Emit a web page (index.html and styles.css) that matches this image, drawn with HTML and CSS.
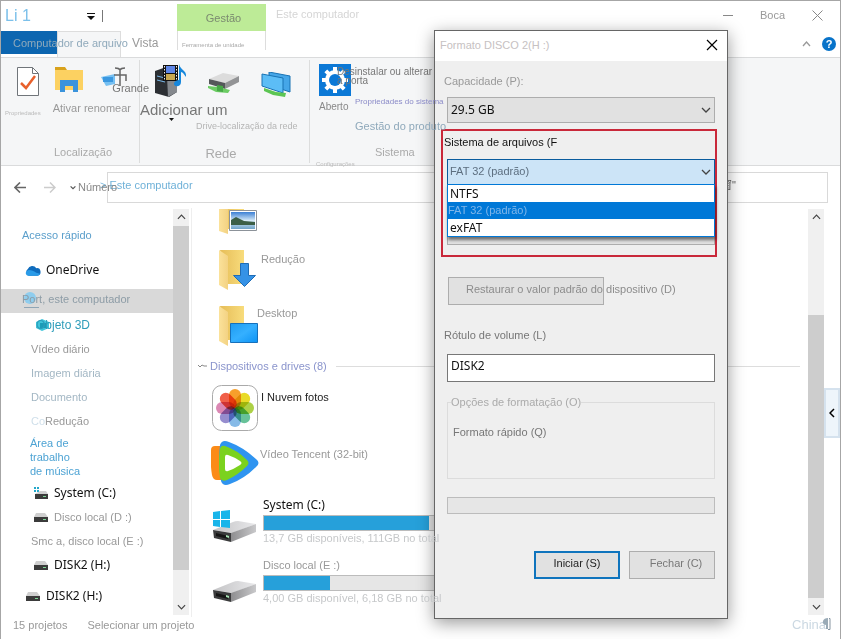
FILE: index.html
```html
<!DOCTYPE html>
<html lang="pt">
<head>
    <meta charset="UTF-8">
    <meta name="viewport" content="width=device-width, initial-scale=1.0">
    <title>Este computador</title>
    <link rel="stylesheet" href="styles.css">
</head>
<body>
    <!-- Shared icons -->
    <svg class="defs" width="0" height="0" aria-hidden="true">
        <defs>
            <linearGradient id="folder-front" x1="0" x2="1"><stop offset="0" stop-color="#fbe29a"/><stop offset="1" stop-color="#f3d283"/></linearGradient>
            <linearGradient id="folder-back" x1="0" x2="1"><stop offset="0" stop-color="#e6bd58"/><stop offset="1" stop-color="#f8dc7c"/></linearGradient>
            <linearGradient id="metal" x1="0" x2="1"><stop offset="0" stop-color="#c4c4c6"/><stop offset="1" stop-color="#e8e8ea"/></linearGradient>
            <linearGradient id="metal-side" x1="0" x2="1"><stop offset="0" stop-color="#8e8e90"/><stop offset="1" stop-color="#c9c9cb"/></linearGradient>
            <linearGradient id="screen" x1="0" y1="0" x2="1" y2="1"><stop offset="0" stop-color="#1e9bf0"/><stop offset="0.5" stop-color="#35b0ff"/><stop offset="1" stop-color="#0c93f5"/></linearGradient>
            <linearGradient id="sky" x1="0" y1="0" x2="0" y2="1"><stop offset="0" stop-color="#3b7fd4"/><stop offset="0.5" stop-color="#d5e9f7"/><stop offset="1" stop-color="#6fa3c8"/></linearGradient>
            <symbol id="folder" viewBox="0 0 26 40">
                <path d="M1 0h24v34H9z" fill="url(#folder-back)"/>
                <path d="M0 0l9 6v34l-9-5z" fill="url(#folder-front)"/>
            </symbol>
            <symbol id="drive" viewBox="0 0 44 22">
                <path d="M0 9L20 1q2-1 5-1l18 3-24 9z" fill="url(#metal)"/>
                <path d="M18 12l25-9v8L18 21z" fill="url(#metal-side)"/>
                <path d="M0 9l18 3v9L1 17z" fill="#3a3b3c"/>
                <path d="M3 12l12 3v3L3 15z" fill="#151515"/>
                <path d="M13 14l3 1v2l-3-1z" fill="#a7e3b4"/>
            </symbol>
            <symbol id="drive-small" viewBox="0 0 14 9">
                <path d="M2 0h9l3 4H0z" fill="#cfcfcf"/>
                <path d="M0 4h14v5H0z" fill="#3b3b3b"/>
                <path d="M9 6h3v1H9z" fill="#7ed695"/>
            </symbol>
            <symbol id="chevron" viewBox="0 0 10 6"><path d="M1 1l4 4 4-4" fill="none" stroke="currentColor" stroke-width="1.3"/></symbol>
        </defs>
    </svg>

    <div class="window">
        <header class="header">
            <div class="header-left">
                <div class="quick-bar">
                    <span class="quick-title">Li 1</span>
                    <svg class="quick-caret" width="8" height="7" viewBox="0 0 8 7"><path d="M0 0h8v1H0zM0 3h8L4 7z" fill="#111"/></svg>
                    <span class="quick-sep"></span>
                </div>
                <div class="tabs">
                    <button class="tab tab-file">Computador de arquivo</button>
                    <span class="tab-selected"></span>
                    <button class="tab tab-view">Vista</button>
                </div>
            </div>
            <div class="context-tab">
                <div class="context-title">Gestão</div>
                <button class="context-name">Ferramenta de unidade</button>
            </div>
            <div class="header-title">Este computador</div>
            <div class="header-right">
                <div class="window-buttons">
                    <button class="plain" aria-label="Minimizar"><svg width="10" height="10"><path d="M0 5.500h10" stroke="#888"/></svg></button>
                    <button class="plain">Boca</button>
                    <button class="plain" aria-label="Sair"><svg width="11" height="11"><path d="M.5.500l10 10M10.500.500l-10 10" stroke="#888"/></svg></button>
                </div>
                <div class="help-buttons">
                    <button class="plain" aria-label="Recolher"><svg width="9" height="6" viewBox="0 0 9 6"><path d="M1 5l3.500-4L8 5" fill="none" stroke="#999" stroke-width="1.300"/></svg></button>
                    <button class="help" aria-label="Ajuda">?</button>
                </div>
            </div>
        </header>

        <section class="ribbon">
            <div class="group group-place">
                <div class="tools">
                    <div class="tool">
                        <svg width="22" height="29" viewBox="0 0 22 29"><path d="M.5.500h15l6 6v22H.5z" fill="#fff" stroke="#70757a"/><path d="M15.500.500v6h6" fill="none" stroke="#70757a"/><path d="M4 16l5 5 9-12" fill="none" stroke="#e8602c" stroke-width="2.500"/></svg>
                        <span class="text-tiny">Propriedades</span>
                    </div>
                    <div class="tool">
                        <div class="icons">
                            <svg width="28" height="25" viewBox="0 0 28 25"><path d="M0 0h10l2 3H0z" fill="#d9a21c"/><path d="M0 3h28v20H0z" fill="#fcd161"/><path d="M5 13h18v12h-5v-6h-8v6H5z" fill="#3a93dc"/></svg>
                            <svg width="28" height="29" viewBox="0 0 28 29"><path d="M1 10l14-3v10L6 19z" fill="#76c0f2"/><path d="M3 10h10v5H3z" fill="#3b98e0"/><path d="M15 1q4 0 5 2 1-2 5-2M20 2v17M14 8h12v6" fill="none" stroke="#666" stroke-width="1.500"/></svg>
                            <span class="icon-note">Grande</span>
                        </div>
                        <span>Ativar renomear</span>
                    </div>
                </div>
                <div class="group-name">Localização</div>
            </div>

            <div class="group group-net">
                <div class="icons">
                    <svg width="32" height="33" viewBox="0 0 32 33"><path d="M0 7l14-5 8 4v22l-8 5-14-4z" fill="#2c2f33"/><path d="M12 12l10-3v19l-9 5z" fill="#85898e"/><path d="M2 12l8 2M2 16l8 2" stroke="#79b7e8"/><path d="M8 1h15v16H8z" fill="#111"/><path d="M11 2h9v7h-9z" fill="#5f86e6"/><path d="M11 10h9v6h-9z" fill="#c9a850"/><path d="M9.500 2v15M21.500 2v15" stroke="#eee" stroke-dasharray="1.500 1.500"/><path d="M24 0c1 6 8 6 7 13l-3-4c-1-1-2-1-2-1v10c0 6-8 5-7 1 1-2 3-3 5-3z" fill="#1687dc"/></svg>
                    <svg class="icon-low" width="32" height="22" viewBox="0 0 32 22"><path d="M1 7l14-6 16 3-14 7z" fill="#dcdcdc"/><path d="M17 11l14-7v6l-14 7z" fill="#939496"/><path d="M1 7l16 4v6L1 12z" fill="#55585a"/><path d="M0 14l10 1 12 3-2 3-12-1-8-4z" fill="#6ccc64"/><path d="M9 13l6 1v6l-6-1z" fill="#47a847"/></svg>
                    <svg class="icon-low" width="30" height="26" viewBox="0 0 30 26"><path d="M8 0l21 4v16L8 13z" fill="#45a6e8" stroke="#1873b4"/><path d="M1 2l21 4v15L1 14z" fill="#5cbdf6" stroke="#1873b4"/><path d="M3 16l12 4 10 1-1 4-12-2-9-4z" fill="#5cc553"/></svg>
                </div>
                <button class="plain add-button">Adicionar um<svg class="add-caret" width="5" height="3" viewBox="0 0 5 3"><path d="M0 0h5L2.500 3z" fill="#111"/></svg></button>
                <span class="net-text">Drive-localização da rede</span>
                <div class="group-name group-name-big">Rede</div>
            </div>

            <div class="group group-system">
                <div class="system-tools">
                    <div class="open-tool">
                        <svg width="32" height="32" viewBox="0 0 32 32"><path d="M0 0h32v32H0z" fill="#0b78d6"/><g fill="#fff"><path d="M14 3h4v26h-4zM3 14h26v4H3z"/><path d="M14 3h4v26h-4zM3 14h26v4H3z" transform="rotate(45 16 16)"/><circle cx="16" cy="16" r="10"/></g><circle cx="16" cy="16" r="6" fill="#0b78d6"/></svg>
                        <button class="plain">Aberto</button>
                    </div>
                    <div class="system-links">
                        <a href="#" class="link-uninstall">Desinstalar ou alterar<br>a porta</a>
                        <a href="#" class="link-props">Propriedades do sistema</a>
                        <a href="#" class="link-manage">Gestão do produto</a>
                    </div>
                </div>
                <div class="group-name">Sistema</div>
                <span class="text-tiny settings-text">Configurações</span>
            </div>
        </section>

        <nav class="address">
            <button class="plain" aria-label="Voltar"><svg width="12" height="11" viewBox="0 0 12 11"><path d="M12 5.500H1M6 .5l-5 5 5 5" fill="none" stroke="#666" stroke-width="1.600"/></svg></button>
            <button class="plain" aria-label="Avançar"><svg width="12" height="11" viewBox="0 0 12 11"><path d="M0 5.500h11M6 .5l5 5-5 5" fill="none" stroke="#ccc" stroke-width="1.500"/></svg></button>
            <button class="plain recent"><svg width="6" height="5" viewBox="0 0 10 6"><path d="M1 1l4 4 4-4" fill="none" stroke="#555" stroke-width="2"/></svg><span>Número</span></button>
            <div class="address-box">
                <a href="#">&gt; Este computador</a>
                <span class="address-search">窗"</span>
            </div>
        </nav>

        <main class="main">
            <ul class="sidebar">
                <li class="row row-top"><a href="#">Acesso rápido</a></li>
                <li class="row row-tall row-segoe">
                    <svg width="17" height="11" viewBox="0 0 17 11"><path d="M4 11a4 4 0 0 1-1-7 5 5 0 0 1 9-1 4 4 0 0 1 1 8z" fill="#0f6cbd"/><path d="M3 11c-3-1-3-5 1-6 3 0 5 1 8 3l4 1c0 1-1 2-3 2z" fill="#2a9be8"/></svg>
                    <a href="#">OneDrive</a>
                </li>
                <li class="row row-selected">
                    <svg class="row-mark" width="17" height="17" viewBox="0 0 17 17"><circle cx="8" cy="7" r="6" fill="#8fcdee"/><path d="M2 16.500h15" stroke="#8fa5b5"/></svg>
                    <a href="#">Port, este computador</a>
                </li>
                <li class="row row-cyan">
                    <svg class="row-mark" width="13" height="12" viewBox="0 0 13 12"><path d="M0 3l6-3 7 3v6l-7 3-6-3z" fill="#3fc5da"/><path d="M4 4h6v5H4z" fill="#1a9cb8"/></svg>
                    <a href="#">Objeto 3D</a>
                </li>
                <li class="row row-child row-gray"><a href="#">Vídeo diário</a></li>
                <li class="row row-child row-pale"><a href="#">Imagem diária</a></li>
                <li class="row row-child row-pale"><a href="#">Documento</a></li>
                <li class="row row-child row-gray"><span class="faded">Co</span><a href="#">Redução</a></li>
                <li class="row row-child row-lines"><a href="#">Área de<br>trabalho<br>de música</a></li>
                <li class="row row-drive row-segoe">
                    <svg width="14" height="12" viewBox="0 0 14 12"><path d="M0 0h2v2H0zM3 0h2v2H3zM0 3h2v2H0zM3 3h2v2H3z" fill="#22a7c9"/><path d="M6 4h6l2 3H1z" fill="#cfcfcf"/><path d="M1 7h13v5H1z" fill="#3b3b3b"/><path d="M9 9h3v1H9z" fill="#7ed695"/></svg>
                    <a href="#">System (C:)</a>
                </li>
                <li class="row row-drive row-gray"><svg width="14" height="9"><use href="#drive-small"/></svg><a href="#">Disco local (D :)</a></li>
                <li class="row row-child row-gray"><a href="#">Smc a, disco local (E :)</a></li>
                <li class="row row-drive row-segoe"><svg width="14" height="9"><use href="#drive-small"/></svg><a href="#">DISK2 (H:)</a></li>
                <li class="row row-tall row-segoe"><svg width="14" height="9"><use href="#drive-small"/></svg><a href="#">DISK2 (H:)</a></li>
            </ul>
            <div class="scrollbar scrollbar-left">
                <svg class="flip" width="9" height="6"><use href="#chevron"/></svg>
                <span class="thumb"></span>
                <svg width="9" height="6"><use href="#chevron"/></svg>
            </div>

            <section class="content">
                <div class="tile tile-cut">
                    <svg class="folder-icon" width="39" height="25" viewBox="0 0 39 25"><path d="M1 0h24v20H9z" fill="url(#folder-back)"/><path d="M0 0h9v25l-9-3z" fill="url(#folder-front)"/><path d="M10.500 1.500h27v20h-27z" fill="#fff" stroke="#8c9299"/><path d="M12 3h24v17H12z" fill="url(#sky)"/><path d="M12 11l5-3 8 4 11 1v3H12z" fill="#3c5f46"/></svg>
                </div>
                <div class="tile">
                    <svg class="folder-icon" width="39" height="40" viewBox="0 0 39 40"><use href="#folder" width="26" height="40"/><path d="M21.500 13.500h8v12h7l-11 11-11-11h7z" fill="#3592e6" stroke="#1f6cb5"/></svg>
                    <span class="tile-name">Redução</span>
                </div>
                <div class="tile tile-last">
                    <svg class="folder-icon" width="39" height="40" viewBox="0 0 39 40"><use href="#folder" width="26" height="40"/><path d="M11.500 17.500h27v19h-27z" fill="url(#screen)" stroke="#1670bb"/></svg>
                    <span class="tile-name tile-name-near">Desktop</span>
                </div>
                <h2 class="content-title"><svg width="9" height="4" viewBox="0 0 9 4"><path d="M0 1l2 2 2-2 2 1h3" fill="none" stroke="#888"/></svg>Dispositivos e drives (8)</h2>
                <div class="tile">
                    <svg class="app-icon" width="46" height="46" viewBox="0 0 46 46">
                        <rect x=".5" y=".5" width="45" height="45" rx="9" fill="#fff" stroke="#aaa"/>
                        <g class="petals">
                            <rect x="17" y="4" width="12" height="19" rx="6" fill="#f79a1f"/>
                            <rect x="17" y="4" width="12" height="19" rx="6" fill="#e8d91c" transform="rotate(45 23 23)"/>
                            <rect x="17" y="4" width="12" height="19" rx="6" fill="#a9cf3c" transform="rotate(90 23 23)"/>
                            <rect x="17" y="4" width="12" height="19" rx="6" fill="#5fbf94" transform="rotate(135 23 23)"/>
                            <rect x="17" y="4" width="12" height="19" rx="6" fill="#7fb6e6" transform="rotate(180 23 23)"/>
                            <rect x="17" y="4" width="12" height="19" rx="6" fill="#9087cc" transform="rotate(225 23 23)"/>
                            <rect x="17" y="4" width="12" height="19" rx="6" fill="#d982b0" transform="rotate(270 23 23)"/>
                            <rect x="17" y="4" width="12" height="19" rx="6" fill="#f0563f" transform="rotate(315 23 23)"/>
                        </g>
                    </svg>
                    <span class="tile-name tile-name-dark">I Nuvem fotos</span>
                </div>
                <div class="tile">
                    <svg width="48" height="44" viewBox="0 0 48 44"><path d="M0 9q0-4 4-4h8v34H6q-4 0-5-5Q-1 22 0 9z" fill="#fb8b18"/><path d="M9 4q2-6 9-3 14 5 27 17 5 4 0 8-12 12-26 17-7 3-9-3Q7 22 9 4z" fill="#2f94f0"/><path d="M9 8q1-4 5-3 12 4 22 14 3 3 0 6-9 9-20 14-5 2-7-2Q7 22 9 8z" fill="#7bd21e"/><path d="M14 16q0-3 3-2 6 2 12 6 3 2 0 4-6 4-12 6-3 1-3-2z" fill="#fff"/></svg>
                    <span class="tile-name tile-name-dim">Vídeo Tencent (32-bit)</span>
                </div>
                <div class="tile tile-drive">
                    <svg class="drive-icon" width="44" height="33" viewBox="0 0 44 33"><use href="#drive" y="11" width="44" height="22"/><path d="M0 2l7-1v8H0zM8 1l9-1v9H8zM0 10h7v7l-7-1zM8 10h9v8l-9-1z" fill="#19b5ea"/></svg>
                    <div class="drive-info">
                        <span class="drive-name drive-name-segoe">System (C:)</span>
                        <div class="bar"><div class="bar-fill" style="width: 88%"></div></div>
                        <span class="drive-free">13,7 GB disponíveis, 111GB no total</span>
                    </div>
                </div>
                <div class="tile tile-drive">
                    <svg class="drive-icon" width="44" height="33" viewBox="0 0 44 33"><use href="#drive" y="11" width="44" height="22"/></svg>
                    <div class="drive-info">
                        <span class="drive-name">Disco local (E :)</span>
                        <div class="bar"><div class="bar-fill" style="width: 35%"></div></div>
                        <span class="drive-free">4,00 GB disponível, 6,18 GB no total</span>
                    </div>
                </div>
            </section>
            <div class="scrollbar scrollbar-right">
                <svg class="flip" width="9" height="6"><use href="#chevron"/></svg>
                <span class="thumb"></span>
                <svg width="9" height="6"><use href="#chevron"/></svg>
            </div>
            <button class="side-tab" aria-label="Abrir painel"><svg width="6" height="10" viewBox="0 0 6 10"><path d="M5 1L1 5l4 4" fill="none" stroke="#000" stroke-width="1.500"/></svg></button>
        </main>

        <footer class="status">
            <span>15 projetos</span>
            <span>Selecionar um projeto</span>
            <span class="status-lang">China<svg width="9" height="12" viewBox="0 0 9 12"><path d="M6 0v11H4V7Q0 6 1 3t5-3z" fill="#9aabb7"/><path d="M7 .5h1v11H6" fill="none" stroke="#8796a2"/></svg></span>
        </footer>

        <form class="dialog">
            <div class="dialog-title">
                <span>Formato DISCO 2(H :)</span>
                <button type="button" class="plain" aria-label="Fechar janela"><svg width="12" height="12"><path d="M1 1l10 10M11 1L1 11" stroke="#000" stroke-width="1.200"/></svg></button>
            </div>
            <div class="dialog-body">
                <label class="label-gray" for="capacity">Capacidade (P):</label>
                <div class="select-box">
                    <select id="capacity" class="select-segoe"><option>29.5 GB</option></select>
                    <svg width="10" height="6"><use href="#chevron"/></svg>
                </div>

                <div class="highlight">
                    <label class="label-black" for="file-system">Sistema de arquivos (F</label>
                    <div class="select-box select-open">
                        <select id="file-system"><option>FAT 32 (padrão)</option></select>
                        <svg width="10" height="6"><use href="#chevron"/></svg>
                        <ul class="options">
                            <li>NTFS</li>
                            <li class="option-active">FAT 32 (padrão)</li>
                            <li>exFAT</li>
                        </ul>
                    </div>
                    <div class="select-box select-unit">
                        <select aria-label="Tamanho da unidade"><option></option></select>
                    </div>
                </div>

                <button type="button" class="button button-restore">Restaurar o valor padrão do dispositivo (D)</button>

                <label for="volume">Rótulo de volume (L)</label>
                <input type="text" id="volume" value="DISK2">

                <fieldset>
                    <legend>Opções de formatação (O)</legend>
                    <span>Formato rápido (Q)</span>
                </fieldset>

                <div class="progress"></div>

                <div class="actions">
                    <button type="button" class="button button-start">Iniciar (S)</button>
                    <button type="button" class="button button-close">Fechar (C)</button>
                </div>
            </div>
        </form>
    </div>
</body>
</html>
```

FILE: styles.css
```css
* {
    box-sizing: border-box;
}

body {
    margin: 0;
    font-family: "Liberation Sans", Arial, "Noto Sans CJK SC", sans-serif;
    font-size: 11px;
    line-height: 14px;
    color: #999;
    background: #fff;
}

a {
    color: inherit;
    text-decoration: none;
}

ul {
    list-style: none;
    margin: 0;
    padding: 0;
}

button, input, select {
    font: inherit;
    color: inherit;
}

svg {
    display: block;
    flex: none;
}

.defs {
    position: absolute;
}

.plain {
    padding: 0;
    border: none;
    background: none;
    white-space: nowrap;
}

.window {
    position: relative;
    display: flex;
    flex-direction: column;
    min-height: 100vh;
    border: 1px solid #a6a6a6;
    overflow: hidden;
}

/* Header */
.header {
    display: flex;
    height: 56px;
}

.header-left {
    width: 176px;
}

.quick-bar {
    display: flex;
    align-items: center;
    height: 30px;
    padding-left: 4px;
}

.quick-title {
    width: 82px;
    font-size: 16px;
    color: #7cc0ea;
}

.quick-caret {
    margin-right: 7px;
}

.quick-sep {
    height: 12px;
    border-left: 1px solid #777;
}

.tabs {
    display: flex;
    height: 26px;
}

.tab {
    border: none;
    background: none;
    padding: 0 12px;
    text-align: left;
    white-space: nowrap;
}

.tab-file {
    position: relative;
    width: 56px;
    height: 23px;
    background: #0d66b0;
    color: #8fa9bb;
}

.tab-selected {
    width: 64px;
    background: #f5f6f7;
    border: 1px solid #ddd;
    border-bottom: none;
}

.tab-view {
    height: 23px;
    padding-left: 11px;
    font-size: 12px;
}

.context-tab {
    width: 89px;
    margin-top: 3px;
}

.context-title {
    height: 27px;
    line-height: 28px;
    padding-left: 4px;
    text-align: center;
    background: #bdeb97;
    color: #7b8a70;
}

.context-name {
    width: 100%;
    height: 19px;
    padding: 8px 0 0 4px;
    border: solid #ddd;
    border-width: 0 1px;
    background: none;
    font-size: 6px;
    line-height: 8px;
    text-align: left;
    color: #aaa;
}

.header-title {
    padding: 6px 10px;
    color: #d5d5d5;
}

.header-right {
    margin-left: auto;
    color: #999;
}

.window-buttons, .help-buttons {
    display: flex;
    align-items: center;
    justify-content: flex-end;
    height: 28px;
}

.window-buttons {
    gap: 27px;
    padding-right: 17px;
}

.help-buttons {
    height: 30px;
    gap: 11px;
    padding-right: 4px;
}

.help {
    width: 14px;
    height: 14px;
    padding: 0;
    border: none;
    border-radius: 50%;
    background: #0873c9;
    color: #fff;
    font-weight: bold;
}

/* Ribbon */
.ribbon {
    display: flex;
    height: 109px;
    background: #f5f6f7;
    border: solid #dadbdc;
    border-width: 1px 0;
}

.group {
    position: relative;
    display: flex;
    flex-direction: column;
    margin: 2px 0;
    border-right: 1px solid #dcdddd;
}

.group-place {
    width: 139px;
}

.group-net {
    width: 170px;
}

.group-system {
    flex: 1;
    border-right: none;
}

.tools {
    display: flex;
    gap: 12px;
    padding: 7px 0 0 4px;
}

.tool {
    display: flex;
    flex-direction: column;
    align-items: center;
    gap: 5px;
    white-space: nowrap;
}

.tool > svg {
    margin: 0 0 8px 10px;
}

.text-tiny {
    font-size: 6px;
    line-height: 8px;
    color: #bbb;
}

.icons {
    position: relative;
    display: flex;
    gap: 17px;
}

.icon-note {
    position: absolute;
    left: 57px;
    top: 14px;
    z-index: 1;
    color: #777;
}

.group-name {
    position: absolute;
    left: 0;
    right: 0;
    bottom: 4px;
    padding-left: 26px;
    text-align: center;
    color: #aaa;
}

.group-name-big {
    padding: 0 7px 0 0;
    font-size: 13px;
    bottom: 2px;
}

.group-net .icons {
    gap: 21px;
    padding: 4px 0 0 15px;
}

.icon-low {
    margin-top: 8px;
}

.add-button {
    align-self: flex-start;
    position: relative;
    margin-top: 3px;
    font-size: 15px;
    line-height: 18px;
    color: #777;
}

.add-caret {
    position: absolute;
    left: 29px;
    bottom: -2px;
}

.net-text {
    padding-left: 56px;
    font-size: 9px;
    color: #b5b5b5;
}

.system-tools {
    display: flex;
    padding: 4px 0 0 9px;
}

.open-tool {
    width: 32px;
    font-size: 10px;
    color: #888;
}

.open-tool button {
    margin-top: 4px;
}

.system-links {
    display: flex;
    flex-direction: column;
    align-items: flex-start;
    padding-left: 4px;
    white-space: nowrap;
}

.link-uninstall {
    margin-left: -18px;
    padding-top: 3px;
    font-size: 10px;
    line-height: 9px;
    color: #777;
}

.link-props, .link-manage {
    position: relative;
    z-index: 3;
}

.link-props {
    margin-top: 10px;
    font-size: 8px;
    color: #8b8bc8;
}

.link-manage {
    margin-top: 10px;
    color: #8fa9bb;
}

.group-system .group-name {
    padding-left: 65px;
    text-align: left;
}

.settings-text {
    position: absolute;
    left: 6px;
    bottom: -5px;
}

/* Address */
.address {
    display: flex;
    align-items: center;
    height: 42px;
    padding: 0 12px 0 13px;
}

.address > .plain {
    margin-right: 18px;
}

.address > .recent {
    display: flex;
    align-items: center;
    width: 37px;
    gap: 2px;
    margin: 0 0 0 -4px;
    color: #888;
}

.recent span {
    position: relative;
}

.address-box {
    flex: 1;
    display: flex;
    justify-content: space-between;
    height: 31px;
    padding: 5px 91px 0 0;
    border: 1px solid #d9d9d9;
    color: #6fb1d8;
}

.address-box a {
    margin-left: -8px;
}

.address-search {
    color: #666;
}

/* Main area */
.main {
    flex: 1;
    display: flex;
}

.sidebar {
    width: 172px;
    padding-top: 11px;
}

.row {
    position: relative;
    display: flex;
    align-items: center;
    gap: 6px;
    height: 24px;
    padding-left: 21px;
    color: #5b9fcb;
    white-space: nowrap;
}

.row a {
    position: relative;
}

.row-top {
    height: 32px;
}

.row-tall {
    height: 38px;
    padding-left: 24px;
}

.row-tall svg {
    width: 16px;
}

.row-tall {
    gap: 5px;
}

.row-segoe {
    font-family: "Noto Sans", "Segoe UI", sans-serif;
    font-size: 12px;
    color: #111;
}

.row-selected {
    padding-bottom: 4px;
    background: #d9d9d9;
    color: #8d9ca6;
}

.row-mark {
    position: absolute;
}

.row-cyan {
    padding-left: 35px;
    font-size: 12px;
    color: #2e9dba;
}

.row-child {
    padding-left: 30px;
    gap: 0;
}

.row-gray {
    color: #999;
}

.row-pale {
    color: #a3b7c4;
}

.row-lines {
    height: 48px;
    padding-left: 29px;
    color: #4da3d4;
}

.row-drive {
    padding-left: 33px;
}

.faded {
    color: #cfdfea;
}

.scrollbar {
    display: flex;
    flex-direction: column;
    align-items: center;
    width: 16px;
    margin: 1px 0 2px;
    padding: 5px 0;
    background: #f0f0f0;
    color: #444;
}

.scrollbar .thumb {
    width: 100%;
    background: #cdcdcd;
}

.scrollbar-left {
    margin-right: 2px;
}

.scrollbar-left .thumb {
    flex: 1;
    margin: 6px 0 34px;
}

.scrollbar-right .thumb {
    flex: 1;
    margin: 95px 0 6px;
}

.flip {
    transform: scaleY(-1);
}

.side-tab {
    align-self: center;
    width: 16px;
    height: 50px;
    padding: 0 3px;
    border: 2px solid #d5e2ee;
    background: #eef5fb;
}

.content {
    flex: 1;
    padding: 0 8px 0 19px;
    border-left: 1px solid #eee;
}

.tile {
    display: grid;
    grid-template-columns: 50px 1fr;
    align-items: start;
    height: 56px;
}

.tile-cut {
    height: 42px;
    padding-top: 1px;
}

.tile-last {
    height: 48px;
}

.folder-icon {
    margin-left: 8px;
}

.tile-name {
    padding-top: 2px;
}

.tile-name-near {
    margin-left: -4px;
    padding-top: 0;
}

.tile-name-dark {
    padding-top: 5px;
    color: #222;
}

.tile-name-dim {
    margin-left: -1px;
    padding-top: 6px;
}

.app-icon {
    margin-left: 1px;
}

.petals rect {
    mix-blend-mode: multiply;
    opacity: 0.95;
}

.petals {
    isolation: isolate;
}

.content-title {
    display: flex;
    align-items: center;
    gap: 3px;
    height: 24px;
    margin: 0 0 7px -13px;
    font-size: 11px;
    font-weight: normal;
    color: #8a94cc;
}

.content-title::after {
    content: "";
    flex: 1;
    margin-left: 6px;
    border-top: 1px solid #ddd;
}

.tile-drive {
    height: 60px;
}

.drive-icon {
    margin: 13px 0 0 2px;
}

.drive-info {
    display: flex;
    flex-direction: column;
    padding-left: 2px;
    white-space: nowrap;
}

.drive-name {
    height: 18px;
    line-height: 16px;
}

.drive-name-segoe {
    font-family: "Noto Sans", "Segoe UI", sans-serif;
    font-size: 12px;
    color: #111;
}

.bar {
    width: 190px;
    height: 16px;
    border: 1px solid #bcbcbc;
    background: #e6e6e6;
}

.bar-fill {
    height: 100%;
    background: #26a0da;
}

.drive-free {
    position: relative;
    z-index: 3;
    color: #c6c8ca;
}

/* Status bar */
.status {
    display: flex;
    gap: 20px;
    height: 24px;
    padding: 1px 9px 0 12px;
}

.status-lang {
    display: flex;
    margin-left: auto;
    font-size: 13px;
    color: #cbd8e2;
}

.status-lang svg {
    margin-left: -4px;
}

/* Format dialog */
.dialog {
    position: absolute;
    left: 433px;
    top: 29px;
    z-index: 2;
    width: 294px;
    border: 1px solid #666;
    background: #efefef;
    box-shadow: 0 4px 16px rgba(0, 0, 0, 0.4);
}

.dialog-title {
    display: flex;
    align-items: center;
    justify-content: space-between;
    height: 30px;
    padding: 0 9px 2px 5px;
    background: #fff;
    color: #c6c1c2;
}

.dialog-body {
    display: flex;
    flex-direction: column;
    padding: 13px 12px 39px 9px;
    color: #777;
}

.dialog-body label {
    margin-bottom: 9px;
}

.dialog-body .label-gray {
    color: #999;
}

.dialog-body .label-black {
    display: block;
    margin-bottom: 10px;
    color: #111;
}

.select-box {
    position: relative;
    height: 26px;
    margin-left: 3px;
    color: #444;
}

.select-box select {
    appearance: none;
    width: 100%;
    height: 100%;
    padding: 0 3px;
    border: 1px solid #adadad;
    border-radius: 0;
    background: #e1e1e1;
}

.select-box > svg {
    position: absolute;
    right: 4px;
    top: 10px;
}

.select-box .select-segoe, .dialog input {
    font-family: "Noto Sans", "Segoe UI", sans-serif;
    font-size: 12px;
    color: #111;
}

.select-open select {
    padding: 0 2px 3px;
    border-color: #0a5c9e;
    background: #cce4f7;
    color: #5d6f80;
}

.select-unit {
    height: 25px;
    margin-top: 35px;
}

.highlight {
    margin: 6px -2px 20px -3px;
    padding: 4px 0 10px 1px;
    border: 2px solid #c9283a;
}

.options {
    position: absolute;
    left: 0;
    right: 0;
    top: 25px;
    z-index: 1;
    border: 1px solid #0078d7;
    background: #fff;
    box-shadow: 1px 3px 3px rgba(0, 0, 0, 0.5);
    font-family: "Noto Sans", "Segoe UI", sans-serif;
    font-size: 12px;
    color: #111;
}

.options li {
    height: 17px;
    padding-left: 2px;
    line-height: 17px;
}

.options .option-active {
    padding-left: 0;
    background: #0078d7;
    color: #7fb6ea;
    font-family: "Liberation Sans", Arial, sans-serif;
    font-size: 11px;
}

.button {
    height: 28px;
    padding: 0 0 4px;
    border: 1px solid #adadad;
    background: #e1e1e1;
    white-space: nowrap;
}

.button-restore {
    width: 156px;
    margin: 0 0 23px 4px;
    padding-left: 17px;
    text-align: left;
    color: #8c8c8c;
}

.dialog input {
    height: 28px;
    margin: 3px 0 13px 3px;
    padding: 0 3px 5px;
    border: 1px solid #777;
    background: #fff;
}

fieldset {
    height: 84px;
    margin: 0 0 18px 3px;
    padding: 16px 5px;
    border: 1px solid #dcdcdc;
}

legend {
    padding: 0;
    margin-left: -2px;
    color: #aaa;
}

.progress {
    height: 17px;
    margin-left: 3px;
    border: 1px solid #bcbcbc;
    background: #e6e6e6;
}

.actions {
    display: flex;
    justify-content: flex-end;
    gap: 9px;
    margin-top: 37px;
}

.actions .button {
    width: 86px;
}

.button-start {
    border: 2px solid #0f74bd;
    color: #222;
}

.actions .button-close {
    padding-left: 8px;
}
```
